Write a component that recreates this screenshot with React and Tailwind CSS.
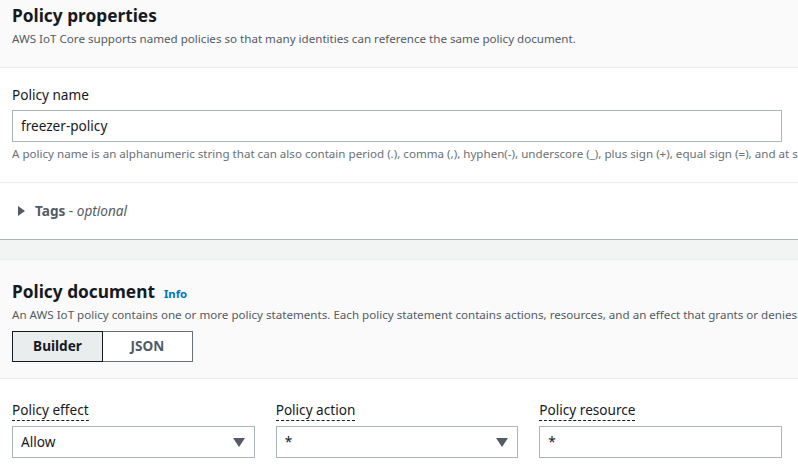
export default function App() {
  const font = { fontFamily: '"Noto Sans", "Open Sans", Arial, sans-serif' };
  return (
    <div className="w-[798px] h-[466px] overflow-hidden bg-[#f2f3f3] text-[#16191f]" style={font}>
      {/* Panel 1 */}
      <div className="bg-white border-b border-[#aab7b8]">
        <div className="bg-[#fafafa] border-b border-[#eaeded] pl-[12px] pr-[16px] pt-[4px] pb-[20px]">
          <h2 className="text-[17.3px] leading-[24px] font-bold">Policy properties</h2>
          <p className="text-[11.6px] leading-[16px] text-[#545b64] mt-[3px] whitespace-nowrap">
            AWS IoT Core supports named policies so that many identities can reference the same policy document.
          </p>
        </div>
        <div className="pl-[12px] pr-[16px] pt-[17px] pb-[20px] border-b border-[#eaeded]">
          <div className="text-[13.6px] leading-[20px]">Policy name</div>
          <div className="mt-[5px] h-[32px] border border-[#aab7b8] bg-white flex items-center px-[8px] text-[13.6px]">
            freezer-policy
          </div>
          <p className="text-[11.6px] leading-[16px] text-[#687078] mt-[4px] whitespace-nowrap">
            A policy name is an alphanumeric string that can also contain period (.), comma (,), hyphen(-), underscore (_), plus sign (+), equal sign (=), and at sign (@) characters, but no spaces.
          </p>
        </div>
        <div className="h-[56px] pl-[18px] flex items-center gap-[10px]">
          <svg width="7" height="10" viewBox="0 0 7 10">
            <path d="M0 0 L7 5 L0 10 Z" fill="#545b64" />
          </svg>
          <span className="text-[13.6px] text-[#545b64]">
            <span className="font-bold">Tags</span>
            <span> - </span>
            <span className="italic">optional</span>
          </span>
        </div>
      </div>
      <div className="h-[19px]"></div>
      {/* Panel 2 */}
      <div className="bg-white border-t border-[#eaeded]">
        <div className="bg-[#fafafa] border-b border-[#eaeded] pl-[12px] pr-[16px] pt-[20px] pb-[16px]">
          <div className="flex items-baseline gap-[9px]">
            <h2 className="text-[17.3px] leading-[24px] font-bold">Policy document</h2>
            <span className="text-[11.3px] font-bold text-[#0073bb]">Info</span>
          </div>
          <p className="text-[11.6px] leading-[16px] text-[#545b64] mt-[3px] whitespace-nowrap">
            An AWS IoT policy contains one or more policy statements. Each policy statement contains actions, resources, and an effect that grants or denies access.
          </p>
          <div className="mt-[8px] flex w-[181px] h-[31px]">
            <div className="w-[91px] flex items-center justify-center bg-[#eaeded] border border-[#16191f] text-[13.6px] font-bold text-[#16191f]">
              Builder
            </div>
            <div className="w-[90px] flex items-center justify-center bg-white border border-l-0 border-[#687078] text-[13.6px] font-bold text-[#545b64]">
              JSON
            </div>
          </div>
        </div>
        <div className="pl-[12px] pr-[16px] pt-[21px] pb-[10px] grid grid-cols-3 gap-[21px]">
          {[
            { label: 'Policy effect', value: 'Allow', select: true },
            { label: 'Policy action', value: '*', select: true },
            { label: 'Policy resource', value: '*', select: false },
          ].map((f) => (
            <div key={f.label}>
              <div className="text-[13.6px] leading-[20px]">
                <span className="border-b border-dashed border-[#16191f] pb-[1px]">{f.label}</span>
              </div>
              <div className="mt-[6px] h-[32px] border border-[#aab7b8] bg-white flex items-center justify-between pl-[8px] pr-[9px] text-[13.6px]">
                <span>{f.value}</span>
                {f.select && (
                  <svg width="12" height="9" viewBox="0 0 12 9">
                    <path d="M0 0 L12 0 L6 9 Z" fill="#545b64" />
                  </svg>
                )}
              </div>
            </div>
          ))}
        </div>
      </div>
    </div>
  );
}
